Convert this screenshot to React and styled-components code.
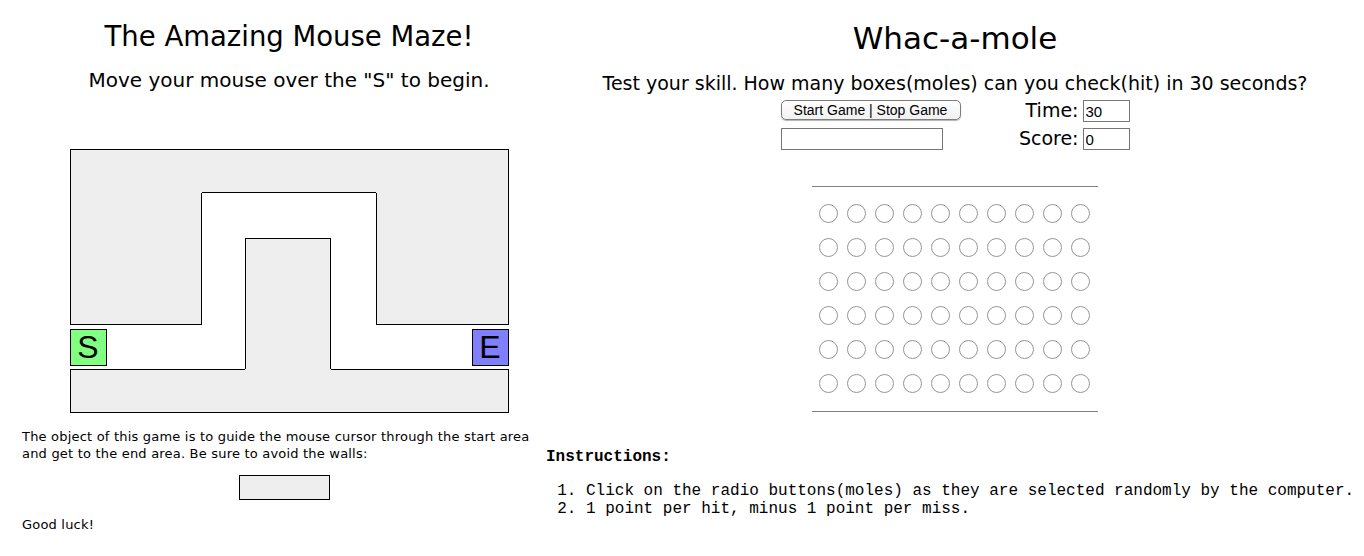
import React from 'react';
import styled, { createGlobalStyle } from 'styled-components';

const GlobalStyle = createGlobalStyle`
  html, body {
    margin: 0;
    padding: 0;
    background: #fff;
  }
  body {
    font-family: "DejaVu Sans", "Liberation Sans", sans-serif;
    color: #000;
  }
`;

const Page = styled.div`
  display: grid;
  grid-template-columns: 538px 818px;
  padding-left: 8px;
`;

const MazeColumn = styled.section`
  display: flex;
  flex-direction: column;
`;

const Stage = styled.div`
  display: flex;
  flex-direction: column;
  align-items: center;
  padding-left: 24px;
`;

const Heading = styled.h1`
  margin: 20px 0 0;
  font-size: ${(p) => p.$size};
  line-height: ${(p) => p.$line};
  font-weight: normal;
  text-align: center;
`;

const Lead = styled.h3`
  margin: 16px 0 0;
  font-size: ${(p) => p.$size};
  line-height: ${(p) => p.$line};
  font-weight: normal;
  text-align: center;
`;

const MazeBoard = styled.div`
  display: grid;
  grid-template-columns: 132px 43px 86px 45px 133px;
  grid-template-rows: 44px 45px 87px 44px 44px;
  margin-top: 57px;
`;

const Wall = styled.div`
  grid-column: ${(p) => p.$col};
  grid-row: ${(p) => p.$row};
  background: #eee;
  border-style: solid;
  border-color: #000;
  border-width: ${(p) => p.$edges};
`;

const Marker = styled.div`
  grid-column: ${(p) => p.$col};
  grid-row: 4;
  justify-self: ${(p) => p.$side};
  align-self: center;
  width: 37px;
  height: 37px;
  box-sizing: border-box;
  border: 1px solid #000;
  background: ${(p) => p.$color};
  display: flex;
  align-items: center;
  justify-content: center;
  font-family: "Liberation Sans", Arial, sans-serif;
  font-size: 32px;
  line-height: 35px;
`;

const Info = styled.div`
  margin-top: 15px;
  padding-left: 14px;
  font-size: 13px;
  line-height: 17px;
  letter-spacing: 0.2px;
`;

const Paragraph = styled.p`
  margin: 0;
`;

const WallBox = styled.div`
  width: 91px;
  height: 25px;
  box-sizing: border-box;
  margin: 13px auto 0;
  background: #eee;
  border: 1px solid #000;
`;

const Farewell = styled.p`
  margin: 16px 0 0;
`;

const MoleColumn = styled.section`
  display: flex;
  flex-direction: column;
`;

const Controls = styled.div`
  width: 349px;
  margin: 6px auto 0;
  display: flex;
  justify-content: space-between;
`;

const ButtonStack = styled.div`
  display: grid;
  grid-template-rows: 22px 22px;
  row-gap: 6px;
  width: 180px;
`;

const GameButton = styled.button`
  width: 180px;
  height: 20px;
  padding: 0;
  font-family: "Liberation Sans", Arial, sans-serif;
  font-size: 14px;
  line-height: 18px;
  color: #000;
  background: linear-gradient(#fff, #f1f1f1);
  border: 1px solid #7d7d7d;
  border-radius: 5px;
  box-shadow: 0 1px 1px rgba(0, 0, 0, 0.3);
`;

const Field = styled.input`
  width: ${(p) => p.$width};
  height: 22px;
  box-sizing: border-box;
  margin: 0;
  padding: 0 2px;
  border: 1px solid #767676;
  background: #fff;
  font-family: "Liberation Sans", Arial, sans-serif;
  font-size: 15px;
  color: #000;
`;

const Stats = styled.div`
  display: grid;
  grid-template-columns: auto 47px;
  grid-template-rows: 22px 22px;
  column-gap: 4px;
  row-gap: 6px;
`;

const StatLabel = styled.label`
  text-align: right;
  font-size: 19px;
  line-height: 21px;
`;

const MoleBoard = styled.div`
  width: 286px;
  box-sizing: border-box;
  margin: 36px auto 0;
  padding: 17px 0 18px 7px;
  border-top: 1px solid #808080;
  border-bottom: 1px solid #808080;
  display: grid;
  grid-template-columns: repeat(10, 19px);
  grid-auto-rows: 19px;
  column-gap: 9px;
  row-gap: 15px;
`;

const Mole = styled.input`
  appearance: none;
  width: 19px;
  height: 19px;
  margin: 0;
  box-sizing: border-box;
  border: 1px solid #959595;
  border-radius: 50%;
  background: #fff;
`;

const Instructions = styled.div`
  margin-top: 36px;
  font-family: "Liberation Mono", "Courier New", monospace;
  font-size: 16px;
  line-height: 18px;
`;

const InstructionsTitle = styled.div`
  font-weight: bold;
`;

const Steps = styled.ol`
  margin: 16px 0 0;
  padding-left: 40px;
  white-space: nowrap;
`;

const walls = [
  { col: '1', row: '1', edges: '1px 0 0 1px' },
  { col: '2 / 5', row: '1', edges: '1px 0 1px 0' },
  { col: '5', row: '1', edges: '1px 1px 0 0' },
  { col: '1', row: '2 / 4', edges: '0 1px 1px 1px' },
  { col: '5', row: '2 / 4', edges: '0 1px 1px 1px' },
  { col: '3', row: '3 / 5', edges: '1px 1px 0 1px' },
  { col: '1 / 3', row: '5', edges: '1px 0 1px 1px' },
  { col: '3', row: '5', edges: '0 0 1px 0' },
  { col: '4 / 6', row: '5', edges: '1px 1px 1px 0' },
];

export default function App() {
  return (
    <>
      <GlobalStyle />
      <Page>
        <MazeColumn>
          <Stage>
            <Heading $size="27.5px" $line="32px">
              The Amazing Mouse Maze!
            </Heading>
            <Lead $size="20px" $line="24px">
              Move your mouse over the "S" to begin.
            </Lead>
            <MazeBoard>
              {walls.map((w, i) => (
                <Wall key={i} $col={w.col} $row={w.row} $edges={w.edges} />
              ))}
              <Marker $col="1" $side="start" $color="#80ff80">
                S
              </Marker>
              <Marker $col="5" $side="end" $color="#8080ff">
                E
              </Marker>
            </MazeBoard>
          </Stage>
          <Info>
            <Paragraph>
              The object of this game is to guide the mouse cursor through the
              start area and get to the end area. Be sure to avoid the walls:
            </Paragraph>
            <WallBox />
            <Farewell>Good luck!</Farewell>
          </Info>
        </MazeColumn>

        <MoleColumn>
          <Heading $size="31px" $line="36px">
            Whac-a-mole
          </Heading>
          <Lead $size="19px" $line="22px">
            Test your skill. How many boxes(moles) can you check(hit) in 30
            seconds?
          </Lead>
          <Controls>
            <ButtonStack>
              <GameButton type="button">Start Game | Stop Game</GameButton>
              <Field type="text" $width="162px" readOnly />
            </ButtonStack>
            <Stats>
              <StatLabel>Time:</StatLabel>
              <Field type="text" $width="47px" defaultValue="30" />
              <StatLabel>Score:</StatLabel>
              <Field type="text" $width="47px" defaultValue="0" />
            </Stats>
          </Controls>
          <MoleBoard>
            {Array.from({ length: 60 }, (_, i) => (
              <Mole key={i} type="radio" name={`mole-${i}`} />
            ))}
          </MoleBoard>
          <Instructions>
            <InstructionsTitle>Instructions:</InstructionsTitle>
            <Steps>
              <li>
                Click on the radio buttons(moles) as they are selected randomly
                by the computer.
              </li>
              <li>1 point per hit, minus 1 point per miss.</li>
            </Steps>
          </Instructions>
        </MoleColumn>
      </Page>
    </>
  );
}
